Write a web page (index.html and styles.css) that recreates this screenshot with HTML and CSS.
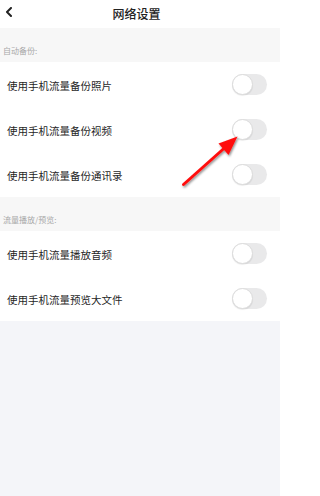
FILE: index.html
```html
<!DOCTYPE html>
<html lang="zh-CN">
<head>
<meta charset="utf-8">
<link rel="stylesheet" href="styles.css">
</head>
<body>
<div class="page">
  <header class="topbar">
    <span class="back">
      <svg width="8" height="10" viewBox="0 0 8 10"><path d="M6 1 L2 5 L6 9" fill="none" stroke="#222" stroke-width="2" stroke-linecap="round" stroke-linejoin="round"/></svg>
    </span>
    <h1 class="title">网络设置</h1>
  </header>

  <div class="section-label">自动备份:</div>
  <div class="group">
    <div class="row"><span class="row-text">使用手机流量备份照片</span><span class="toggle"><span class="knob"></span></span></div>
    <div class="row"><span class="row-text">使用手机流量备份视频</span><span class="toggle"><span class="knob"></span></span></div>
    <div class="row"><span class="row-text">使用手机流量备份通讯录</span><span class="toggle"><span class="knob"></span></span></div>
  </div>

  <div class="section-label">流量播放/预览:</div>
  <div class="group">
    <div class="row"><span class="row-text">使用手机流量播放音频</span><span class="toggle"><span class="knob"></span></span></div>
    <div class="row"><span class="row-text">使用手机流量预览大文件</span><span class="toggle"><span class="knob"></span></span></div>
  </div>

  <svg class="arrow" width="285" height="496" viewBox="0 0 285 496">
    <defs>
      <filter id="sh" x="-20%" y="-20%" width="140%" height="140%">
        <feDropShadow dx="1" dy="1.5" stdDeviation="1.2" flood-color="#000" flood-opacity="0.45"/>
      </filter>
    </defs>
    <g filter="url(#sh)">
      <line x1="183.5" y1="184.5" x2="225" y2="147.5" stroke="#ff0d0d" stroke-width="3" stroke-linecap="round"/>
      <polygon points="237.5,136.5 218.5,143.5 228.5,155" fill="#ff0d0d"/>
    </g>
  </svg>
</div>
</body>
</html>
```

FILE: styles.css
```css
* { box-sizing: border-box; margin: 0; padding: 0; }
html, body { background: #ffffff; }
body {
  width: 285px;
  height: 496px;
  overflow: hidden;
  font-family: "Noto Sans CJK SC", "Noto Sans", sans-serif;
  color: #222;
}
.page {
  position: relative;
  width: 280px;
  height: 496px;
  background: #f4f5f9;
}
.topbar {
  position: relative;
  height: 28px;
  background: #fff;
  display: flex;
  align-items: center;
  justify-content: center;
  padding-right: 7px;
}
.back {
  position: absolute;
  left: 5px;
  top: 7px;
  display: flex;
}
.title {
  font-size: 12px;
  font-weight: 500;
  line-height: 28px;
  color: #222;
}
.section-label {
  height: 34px;
  background: #f7f7f7;
  font-size: 8px;
  line-height: 12px;
  color: #a8a8a8;
  padding: 17px 0 0 3px;
}
.group { background: #fff; }
.row {
  height: 45px;
  display: flex;
  align-items: center;
  justify-content: space-between;
  padding: 0 13px 0 7px;
}
.row-text {
  font-size: 10.5px;
  line-height: 14px;
  color: #1f1f1f;
  padding-top: 2px;
}
.toggle {
  width: 35px;
  height: 21px;
  border-radius: 11px;
  background: #e9e9ea;
  display: flex;
  align-items: center;
}
.knob {
  width: 21px;
  height: 21px;
  border-radius: 50%;
  background: #fff;
  border: 1px solid #dcdcdc;
  box-shadow: 0 1px 1px rgba(0,0,0,0.08);
}
.arrow {
  position: absolute;
  left: 0;
  top: 0;
  pointer-events: none;
}
```
